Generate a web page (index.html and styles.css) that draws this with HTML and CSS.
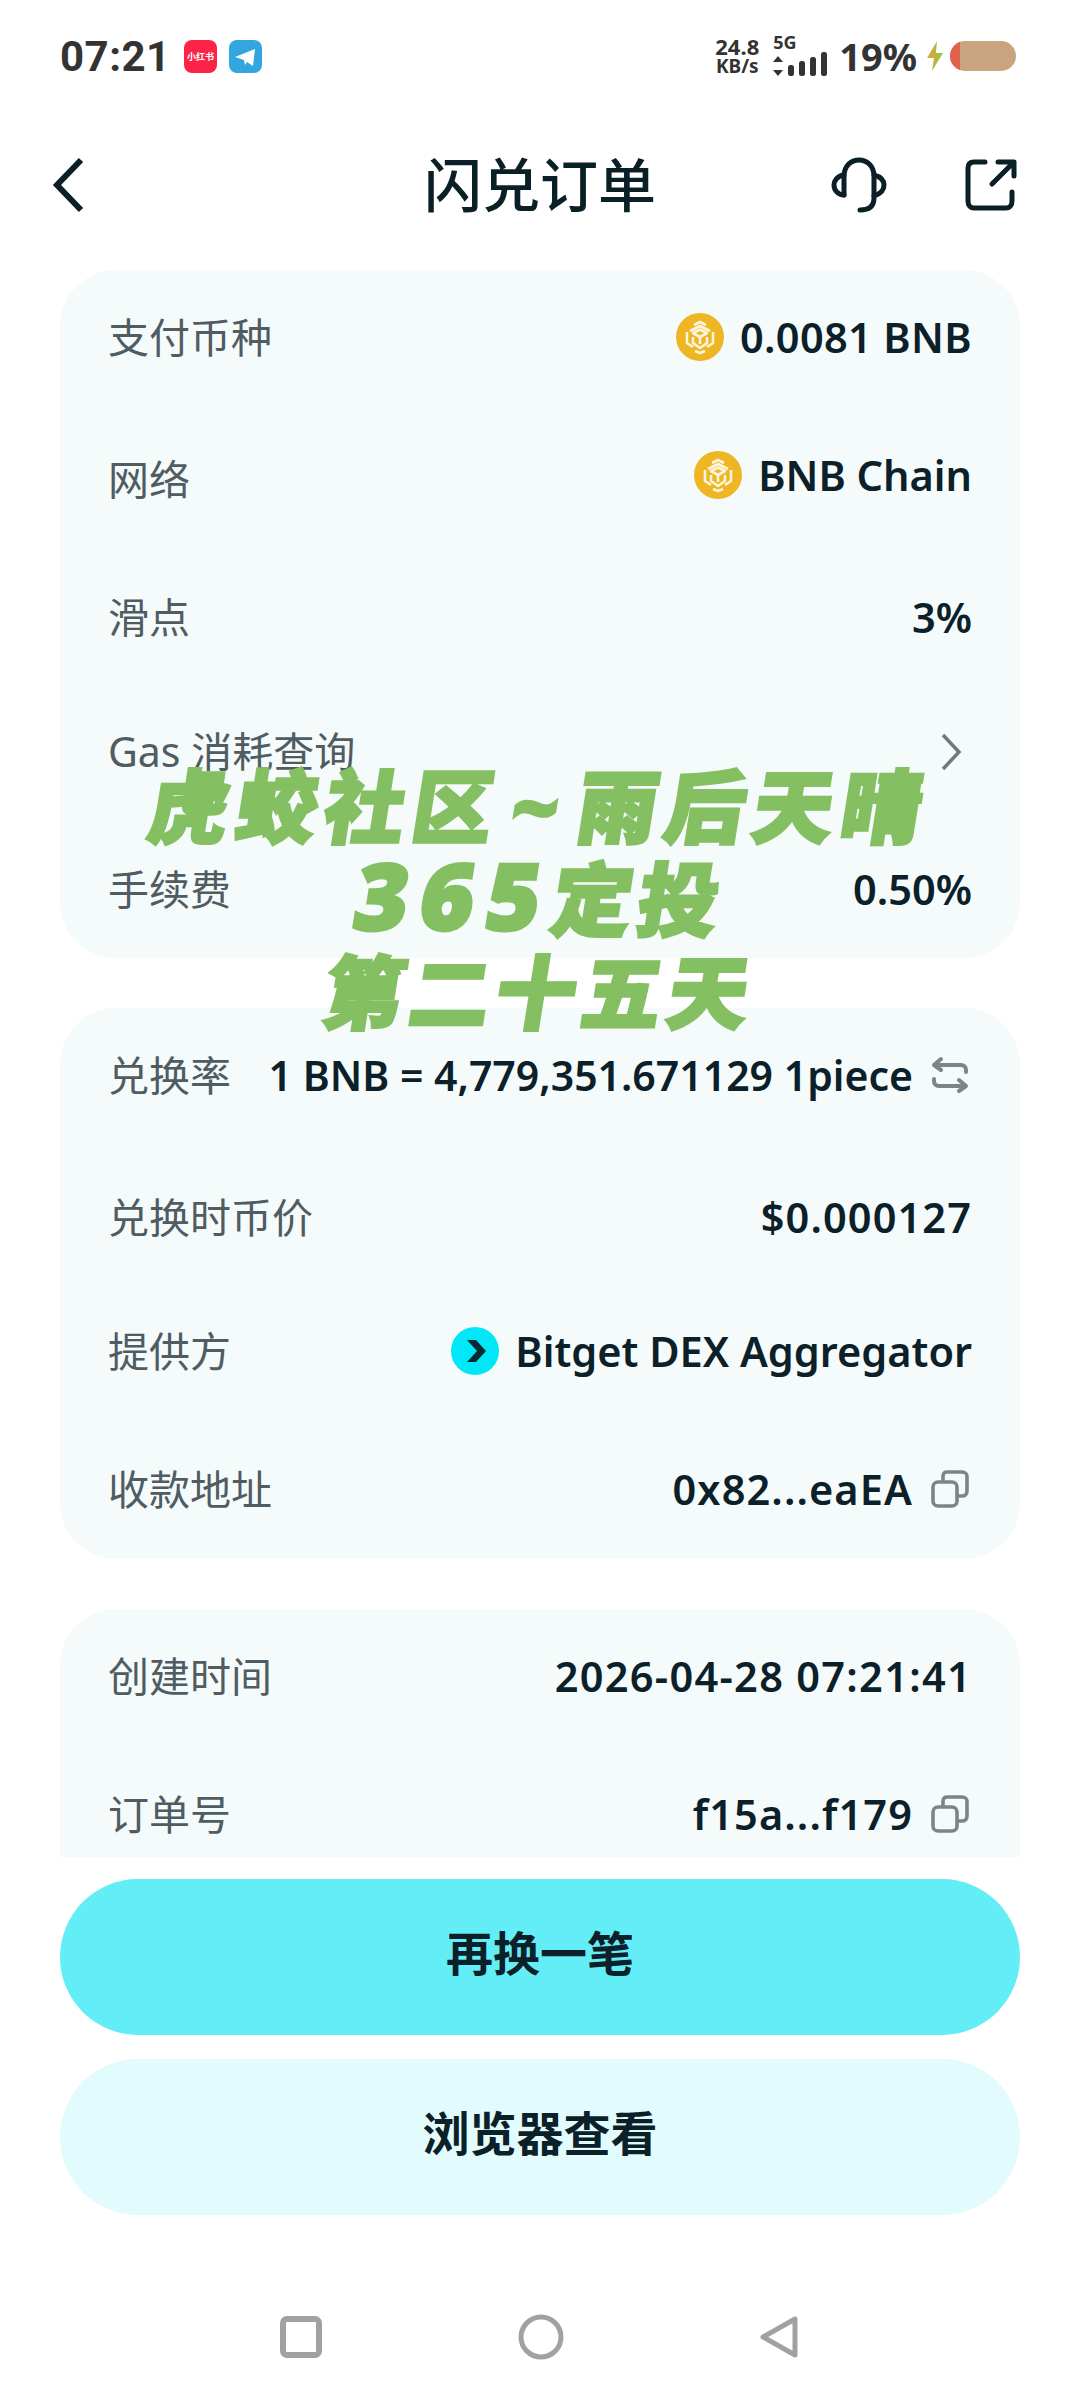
FILE: index.html
```html
<!DOCTYPE html>
<html lang="zh-CN">
<head>
<meta charset="utf-8">
<title>闪兑订单</title>
<link rel="stylesheet" href="styles.css">
</head>
<body>
<div class="page">
  <div class="status">
    <div class="status-left">
      <span class="time">07:21</span>
      <span class="app app-red">小红书</span>
      <span class="app app-blue">
        <svg viewBox="0 0 33 33" width="33" height="33"><path d="M6 17 L26 9 L24 26 L18 22 L16 25 L15 20 Z" fill="#fff"/></svg>
      </span>
    </div>
    <div class="status-right">
      <div class="speed"><span>24.8</span><span class="speed-unit">KB/s</span></div>
      <div class="net">
        <span class="net-5g">5G</span>
        <svg class="net-bars" viewBox="0 0 54 26" width="54" height="26">
          <path d="M5 4 L10 10 H0 Z M5 24 L0 18 H10 Z" fill="#333"/>
          <rect x="15" y="13" width="6" height="11" rx="2.5" fill="#333"/>
          <rect x="26" y="9" width="6" height="15" rx="2.5" fill="#333"/>
          <rect x="37" y="5" width="6" height="19" rx="2.5" fill="#333"/>
          <rect x="48" y="0" width="6" height="24" rx="2.5" fill="#333"/>
        </svg>
      </div>
      <span class="pct">19%</span>
      <svg class="bolt" viewBox="0 0 16 30" width="16" height="30"><path d="M10 0 L0 17 H7 L5 30 L16 12 H9 Z" fill="url(#boltg)"/><defs><linearGradient id="boltg" x1="0" y1="0" x2="1" y2="0"><stop offset="0" stop-color="#e8a33a"/><stop offset="1" stop-color="#8cc84b"/></linearGradient></defs></svg>
      <div class="battery"><span class="battery-low"></span></div>
    </div>
  </div>

  <header class="header">
    <svg class="back" viewBox="0 0 34 56" width="34" height="56"><path d="M29 3 L5 28 L29 53" fill="none" stroke="#0a1f26" stroke-width="6"/></svg>
    <h1 class="title">闪兑订单</h1>
    <div class="header-actions">
      <svg viewBox="0 0 56 56" width="56" height="56" fill="none" stroke="#0a1f26" stroke-width="5" stroke-linecap="round" stroke-linejoin="round"><path d="M13 38 V19 C13 9 20 3 28 3 C36 3 43 9 43 19 V41 C43 49 38 53 29 53"/><path d="M13 18 C6 19 3 24 3 28 C3 33 7 38 13 38"/><path d="M43 18 C50 20 53 24 53 28 C53 33 49 37 43 39"/></svg>
      <svg viewBox="0 0 52 52" width="52" height="52" fill="none" stroke="#0a1f26" stroke-width="5" stroke-linecap="round" stroke-linejoin="round"><path d="M20 3 H9 C5 3 3 5 3 9 V42 C3 46 5 49 9 49 H41 C45 49 47 46 47 42 V33"/><path d="M27 25 L47 5 M33 3 H49 V17"/></svg>
    </div>
  </header>

  <main class="scroll">
    <section class="card card-a">
      <div class="row"><span class="label">支付币种</span><span class="value value-slight"><svg class="coin" viewBox="0 0 48 48" width="48" height="48"><use href="#bnb"/></svg>0.0081 BNB</span></div>
      <div class="row"><span class="label">网络</span><span class="value value-up"><svg class="coin" viewBox="0 0 48 48" width="48" height="48"><use href="#bnb"/></svg>BNB Chain</span></div>
      <div class="row"><span class="label">滑点</span><span class="value">3%</span></div>
      <div class="row"><span class="label">Gas 消耗查询</span><svg class="chev" viewBox="0 0 22 40" width="22" height="40"><path d="M3 3 L19 20 L3 37" fill="none" stroke="#6d797e" stroke-width="3.5"/></svg></div>
      <div class="row"><span class="label">手续费</span><span class="value">0.50%</span></div>
    </section>

    <section class="card card-b">
      <div class="row"><span class="label">兑换率</span><span class="value value-tight">1 BNB = 4,779,351.671129 1piece<svg class="tool" viewBox="0 0 38 38" width="38" height="38" fill="none" stroke="#7b8589" stroke-width="4" stroke-linecap="round" stroke-linejoin="round"><path d="M10 3 L3 9 L10 14 M4 9 H30 C33 9 35 11 35 14 V16"/><path d="M28 24 L35 30 L28 35 M34 30 H8 C5 30 3 28 3 25 V23"/></svg></span></div>
      <div class="row"><span class="label">兑换时币价</span><span class="value value-mid">$0.000127</span></div>
      <div class="row"><span class="label">提供方</span><span class="value"><svg class="coin" viewBox="0 0 48 48" width="48" height="48"><circle cx="24" cy="24" r="24" fill="#00e7f7"/><path d="M16 13 H25 L35 24 L25 35 H16 L26 24 Z" fill="#062a33"/></svg>Bitget DEX Aggregator</span></div>
      <div class="row"><span class="label">收款地址</span><span class="value value-mid">0x82...eaEA<svg class="tool" viewBox="0 0 38 38" width="38" height="38"><use href="#copy"/></svg></span></div>
    </section>

    <section class="card card-c">
      <div class="row"><span class="label">创建时间</span><span class="value value-wide">2026-04-28 07:21:41</span></div>
      <div class="row"><span class="label">订单号</span><span class="value value-mid">f15a...f179<svg class="tool" viewBox="0 0 38 38" width="38" height="38"><use href="#copy"/></svg></span></div>
    </section>
  </main>

  <div class="actions">
    <button class="btn btn-main">再换一笔</button>
    <button class="btn btn-soft">浏览器查看</button>
  </div>

  <nav class="nav">
    <svg viewBox="0 0 42 42" width="42" height="42"><rect x="3" y="3" width="36" height="36" rx="4" fill="none" stroke="#a1a1a1" stroke-width="6"/></svg>
    <svg viewBox="0 0 46 46" width="46" height="46"><circle cx="23" cy="23" r="20" fill="none" stroke="#a1a1a1" stroke-width="5"/></svg>
    <svg viewBox="0 0 38 42" width="38" height="42"><path d="M35 3 V39 L3 21 Z" fill="none" stroke="#a1a1a1" stroke-width="5" stroke-linejoin="round"/></svg>
  </nav>

  <div class="watermark">
    <p class="wm-line wm-first">虎蛟社区 ~ 雨后天晴</p>
    <p class="wm-line"><span class="wm-digits">365</span>定投</p>
    <p class="wm-line">第二十五天</p>
  </div>
</div>

<svg class="defs" width="0" height="0">
  <defs>
    <g id="bnb">
      <circle cx="24" cy="24" r="24" fill="#efb623"/>
      <g fill="none" stroke="#fff" stroke-width="2.6" stroke-opacity=".85" stroke-linejoin="round">
        <path d="M18 12 L24 9 L30 12"/>
        <path d="M14 18 L24 13 L34 18"/>
        <path d="M11 19 V30 L17 34 M37 19 V30 L31 34"/>
        <path d="M17 20 L24 16.5 L31 20 L24 24 Z"/>
        <path d="M17 24 V30 L24 35 L31 30 V24"/>
        <path d="M24 24 V31"/>
        <path d="M19 38 L24 40 L29 38"/>
      </g>
    </g>
    <g id="copy" fill="none" stroke="#7b8589" stroke-width="3.6" stroke-linejoin="round">
      <rect x="2" y="12" width="24" height="24" rx="5"/>
      <path d="M12 12 V6 C12 3 14 2 16 2 H31 C34 2 36 4 36 6 V21 C36 24 34 26 31 26 H26"/>
    </g>
  </defs>
</svg>
</body>
</html>
```

FILE: styles.css
```css
* { box-sizing: border-box; }
html, body { margin: 0; padding: 0; background: #fff; }
body {
  font-family: "Noto Sans", "Noto Sans CJK SC", sans-serif;
  color: #0b2029;
}
.page {
  position: relative;
  width: 1080px;
  height: 2400px;
  display: flex;
  flex-direction: column;
  overflow: hidden;
  background: #fff;
}
.defs { position: absolute; }

/* status bar */
.status {
  height: 112px;
  padding: 0 64px 0 60px;
  display: flex;
  justify-content: space-between;
  align-items: center;
  color: #333;
}
.status-left { display: flex; align-items: center; }
.time {
  font-family: Roboto, sans-serif;
  font-size: 42px;
  font-weight: 700;
  letter-spacing: .5px;
  width: 124px;
}
.app {
  width: 33px;
  height: 33px;
  border-radius: 8px;
  display: flex;
  align-items: center;
  justify-content: center;
}
.app-red {
  background: #fb2347;
  color: #fff;
  font-size: 9px;
  font-weight: 700;
  white-space: nowrap;
  margin-right: 12px;
}
.app-blue { background: #33a5df; }
.status-right { display: flex; align-items: center; }
.speed {
  display: flex;
  flex-direction: column;
  align-items: center;
  font-family: "Noto Sans", sans-serif;
  font-size: 22px;
  line-height: 20px;
  font-weight: 700;
  width: 50px;
  margin-right: 11px;
}
.speed-unit { font-size: 19px; }
.net { display: flex; flex-direction: column; width: 54px; margin-right: 12px; }
.net-5g { font-size: 18px; line-height: 16px; font-weight: 700; }
.net-bars { margin-top: 2px; }
.pct {
  font-family: "Noto Sans", sans-serif;
  font-size: 38px;
  font-weight: 700;
  line-height: 40px;
  margin-right: 10px;
}
.bolt { margin-right: 7px; }
.battery {
  width: 66px;
  height: 30px;
  border-radius: 15px;
  background: #c8a57e;
  overflow: hidden;
}
.battery-low { display: block; width: 10px; height: 100%; background: #e2614e; }

/* header */
.header {
  height: 146px;
  padding: 0 63px 0 52px;
  display: flex;
  align-items: center;
  position: relative;
}
.back { flex: none; }
.title {
  position: absolute;
  left: 0;
  right: 0;
  margin: 0;
  text-align: center;
  font-size: 58px;
  font-weight: 500;
  line-height: 80px;
  color: #0a1f26;
}
.header-actions {
  margin-left: auto;
  display: flex;
  align-items: center;
  gap: 78px;
}

/* scrolling list */
.scroll {
  height: 1599px;
  padding: 12px 60px 0;
  overflow: hidden;
  display: flex;
  flex-direction: column;
  gap: 50px;
  flex: none;
}
.card {
  flex: none;
  background: #f5fafb;
  border-radius: 56px;
  padding: 28px 48px 0 48px;
}
.card-a { height: 688px; }
.card-b { height: 551px; }
.card-c { height: 360px; }
.row {
  height: 80px;
  display: flex;
  align-items: center;
  justify-content: space-between;
}
.card-a .row:nth-child(2) { margin-top: 62px; }
.card-a .row:nth-child(3) { margin-top: 58px; }
.card-a .row:nth-child(4) { margin-top: 54px; }
.card-a .row:nth-child(5) { margin-top: 58px; }
.card-b .row:nth-child(2) { margin-top: 62px; }
.card-b .row:nth-child(3) { margin-top: 54px; }
.card-b .row:nth-child(4) { margin-top: 58px; }
.card-c .row:nth-child(2) { margin-top: 58px; }
.label {
  font-size: 41px;
  line-height: 56px;
  margin-top: -3px;
  color: #4f5c62;
  white-space: nowrap;
}
.value {
  display: flex;
  align-items: center;
  font-size: 41.5px;
  font-weight: 600;
  margin-top: -3px;
  white-space: nowrap;
  color: #0b2029;
}
.value-tight { font-size: 41px; }
.value-slight { letter-spacing: .35px; }
.value-mid { letter-spacing: 1.1px; }
.value-wide { letter-spacing: 1.3px; }
.value-up { transform: translateY(-4px); }
.coin { margin-right: 16px; flex: none; }
.tool { margin-left: 18px; margin-right: 3px; flex: none; }
.chev { margin-right: 10px; }

/* actions */
.actions {
  flex: none;
  padding: 22px 60px 0;
  display: flex;
  flex-direction: column;
  gap: 24px;
}
.btn {
  height: 156px;
  border: 0;
  border-radius: 78px;
  padding: 0 0 14px;
  font-family: inherit;
  font-size: 47px;
  font-weight: 700;
  color: #0b2029;
}
.btn-main { background: #63eef7; }
.btn-soft { background: #e2fbfd; }

/* nav */
.nav {
  position: absolute;
  left: 280px;
  top: 2314px;
  width: 518px;
  display: flex;
  justify-content: space-between;
  align-items: center;
}

/* watermark */
.watermark {
  position: absolute;
  left: 0;
  right: 0;
  top: 759px;
  text-align: center;
  color: #84bf62;
  pointer-events: none;
}
.wm-line {
  margin: 0;
  height: 93px;
  font-size: 80px;
  line-height: 93px;
  font-weight: 900;
  letter-spacing: 6px;
  white-space: nowrap;
  -webkit-text-stroke: 3px #84bf62;
  transform: skewX(-9deg);
}
.wm-first { letter-spacing: 8px; word-spacing: -18px; }
.wm-digits {
  display: inline-block;
  font-size: 92px;
  line-height: 80px;
  letter-spacing: 12px;
}
```
